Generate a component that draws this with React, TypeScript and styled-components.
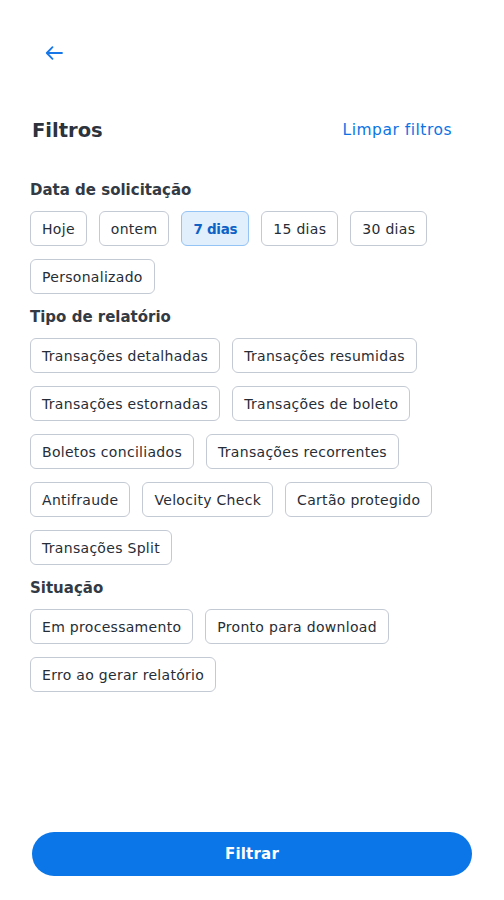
import * as React from "react";
import styled, { createGlobalStyle } from "styled-components";

const GlobalStyle = createGlobalStyle`
  html, body {
    margin: 0;
    padding: 0;
    background: #ffffff;
  }
  body {
    font-family: "DejaVu Sans", "Open Sans", sans-serif;
    color: #2f3640;
  }
`;

const dateOptions = ["Hoje", "ontem", "7 dias", "15 dias", "30 dias", "Personalizado"];
const reportOptions = [
  "Transações detalhadas",
  "Transações resumidas",
  "Transações estornadas",
  "Transações de boleto",
  "Boletos conciliados",
  "Transações recorrentes",
  "Antifraude",
  "Velocity Check",
  "Cartão protegido",
  "Transações Split",
];
const statusOptions = ["Em processamento", "Pronto para download", "Erro ao gerar relatório"];

export default function App() {
  const [date, setDate] = React.useState("7 dias");
  const [reports, setReports] = React.useState<string[]>([]);
  const [status, setStatus] = React.useState<string[]>([]);

  const toggle = (list: string[], set: (v: string[]) => void, item: string) => {
    set(list.includes(item) ? list.filter((i) => i !== item) : [...list, item]);
  };

  return (
    <>
      <GlobalStyle />
      <Screen>
        <TopBar>
          <BackButton aria-label="Voltar">
            <svg width="18" height="14" viewBox="0 0 18 14" fill="none">
              <path
                d="M17 7H2M7.5 1.2L1.8 7l5.7 5.8"
                stroke="#1677e8"
                strokeWidth="1.8"
                strokeLinecap="round"
                strokeLinejoin="round"
              />
            </svg>
          </BackButton>
        </TopBar>

        <Header>
          <Title>Filtros</Title>
          <ClearLink
            onClick={() => {
              setDate("");
              setReports([]);
              setStatus([]);
            }}
          >
            Limpar filtros
          </ClearLink>
        </Header>

        <Sections>
          <Section>
            <SectionTitle>Data de solicitação</SectionTitle>
            <ChipList>
              {dateOptions.map((o) => (
                <Chip key={o} $active={date === o} onClick={() => setDate(o)}>
                  {o}
                </Chip>
              ))}
            </ChipList>
          </Section>

          <Section>
            <SectionTitle>Tipo de relatório</SectionTitle>
            <ChipList>
              {reportOptions.map((o) => (
                <Chip key={o} $active={reports.includes(o)} onClick={() => toggle(reports, setReports, o)}>
                  {o}
                </Chip>
              ))}
            </ChipList>
          </Section>

          <Section>
            <SectionTitle>Situação</SectionTitle>
            <ChipList>
              {statusOptions.map((o) => (
                <Chip key={o} $active={status.includes(o)} onClick={() => toggle(status, setStatus, o)}>
                  {o}
                </Chip>
              ))}
            </ChipList>
          </Section>
        </Sections>

        <Footer>
          <SubmitButton>Filtrar</SubmitButton>
        </Footer>
      </Screen>
    </>
  );
}

const Screen = styled.div`
  width: 504px;
  height: 900px;
  box-sizing: border-box;
  padding: 0 30px;
  display: flex;
  flex-direction: column;
`;

const TopBar = styled.div`
  height: 70px;
  padding-top: 37px;
  box-sizing: border-box;
`;

const BackButton = styled.button`
  border: none;
  background: none;
  padding: 0;
  margin-left: 15px;
  width: 20px;
  height: 32px;
  display: flex;
  align-items: center;
  cursor: pointer;
`;

const Header = styled.div`
  display: flex;
  justify-content: space-between;
  align-items: center;
  margin-top: 45px;
  padding: 0 22px 0 2px;
  height: 30px;
`;

const Title = styled.h1`
  margin: 0;
  font-size: 19.5px;
  font-weight: 700;
  color: #2c333d;
`;

const ClearLink = styled.button`
  border: none;
  background: none;
  padding: 0;
  font-family: inherit;
  font-size: 15.5px;
  letter-spacing: 0.5px;
  color: #0b74e5;
  cursor: pointer;
`;

const Sections = styled.div`
  display: flex;
  flex-direction: column;
  gap: 13px;
  margin-top: 35px;
`;

const Section = styled.section`
  display: flex;
  flex-direction: column;
  gap: 11px;
`;

const SectionTitle = styled.h2`
  margin: 0;
  font-size: 15px;
  font-weight: 700;
  color: #333a44;
  line-height: 20px;
`;

const ChipList = styled.div`
  display: flex;
  flex-wrap: wrap;
  gap: 13px 12px;
  padding-right: 10px;
`;

const Chip = styled.button<{ $active: boolean }>`
  height: 35px;
  box-sizing: border-box;
  padding: 0 11px;
  border-radius: 6px;
  border: 1.5px solid ${(p) => (p.$active ? "#94c3f5" : "#c4cad4")};
  background: ${(p) => (p.$active ? "#e1eefc" : "#ffffff")};
  color: ${(p) => (p.$active ? "#0d62c6" : "#272d36")};
  font-family: inherit;
  font-size: ${(p) => (p.$active ? "13.5px" : "14px")};
  letter-spacing: ${(p) => (p.$active ? "-0.3px" : "0.3px")};
  font-weight: ${(p) => (p.$active ? 700 : 400)};
  cursor: pointer;
  white-space: nowrap;
`;

const Footer = styled.div`
  margin-top: auto;
  padding: 0 2px 24px;
`;

const SubmitButton = styled.button`
  width: 100%;
  height: 44px;
  border: none;
  border-radius: 22px;
  background: #0a76e8;
  color: #ffffff;
  font-family: inherit;
  font-size: 15px;
  font-weight: 700;
  letter-spacing: 0.2px;
  cursor: pointer;
`;
